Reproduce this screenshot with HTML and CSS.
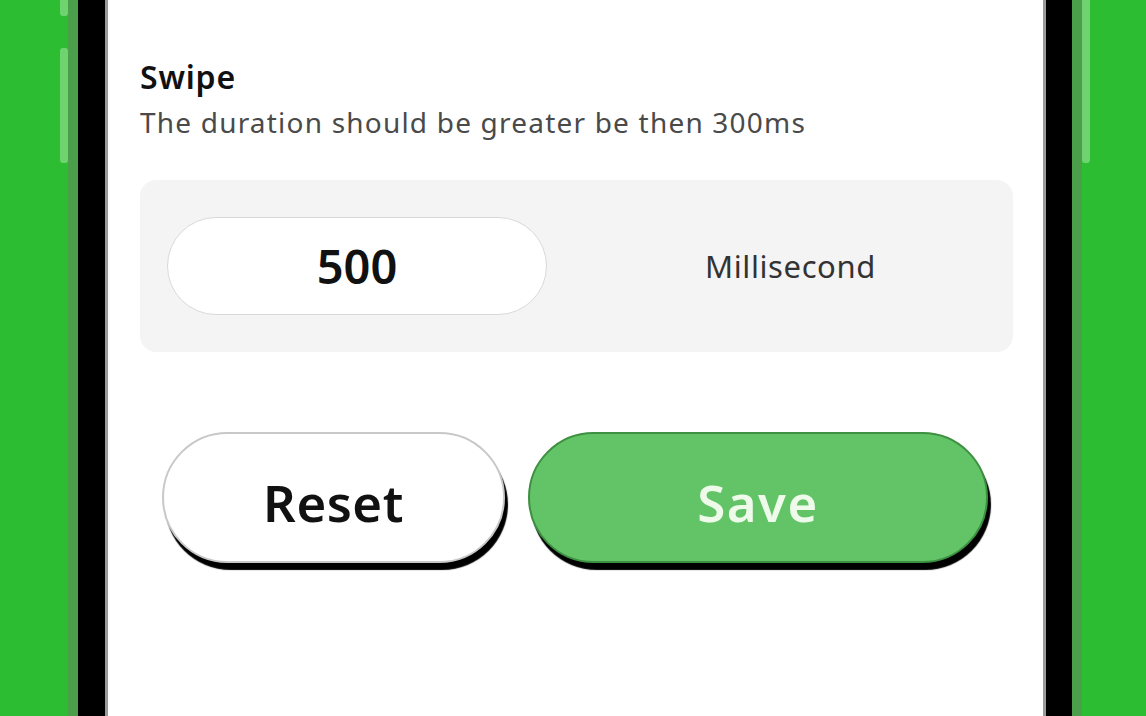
FILE: index.html
```html
<!DOCTYPE html>
<html>
<head>
<meta charset="utf-8">
<link rel="stylesheet" href="styles.css">
</head>
<body>
<div class="device">
  <div class="side side-left">
    <span class="key key-a"></span>
    <span class="key key-b"></span>
  </div>
  <div class="frame">
    <div class="bezel">
      <div class="screen">
        <div class="section">
          <h2 class="title">Swipe</h2>
          <p class="subtitle">The duration should be greater be then 300ms</p>
        </div>
        <div class="panel">
          <div class="input-pill">500</div>
          <div class="unit">Millisecond</div>
        </div>
        <div class="actions">
          <button class="btn btn-reset">Reset</button>
          <button class="btn btn-save">Save</button>
        </div>
      </div>
    </div>
  </div>
  <div class="side side-right">
    <span class="key key-c"></span>
  </div>
</div>
</body>
</html>
```
FILE: styles.css
```css
* { box-sizing: border-box; }
html, body {
  margin: 0;
  height: 716px;
  overflow: hidden;
}
body {
  background: #2dbd33;
  font-family: "Noto Sans", "Liberation Sans", sans-serif;
}
.device {
  display: flex;
  height: 716px;
  margin-left: 60px;
}
.side {
  width: 8px;
  display: flex;
  flex-direction: column;
}
.key {
  display: block;
  width: 8px;
  background: #6fd46f;
  border-radius: 0 0 3px 3px;
}
.key-a { height: 16px; }
.key-b { height: 115px; margin-top: 32px; border-radius: 3px; }
.key-c { height: 163px; }
.frame {
  background: #4b9f4b;
  padding: 0 10px;
  height: 716px;
}
.bezel {
  background: #000;
  padding: 0 26px 0 27px;
  height: 716px;
}
.screen {
  width: 941px;
  height: 716px;
  background: #fff;
  border-left: 3px solid #9a9a9a;
  border-right: 3px solid #9a9a9a;
  padding: 56px 30px 0 32px;
}
.title {
  margin: 0;
  font-size: 32px;
  font-weight: 600;
  letter-spacing: 0.8px;
  color: #111;
  line-height: 42px;
}
.subtitle {
  margin: 6px 0 0;
  font-size: 28px;
  letter-spacing: 1.2px;
  color: #4a4a4a;
  line-height: 36px;
}
.panel {
  margin-top: 40px;
  height: 172px;
  background: #f4f4f4;
  border-radius: 16px;
  display: flex;
  align-items: center;
  padding-left: 27px;
}
.input-pill {
  width: 380px;
  height: 98px;
  background: #fff;
  border: 1px solid #d9d9d9;
  border-radius: 49px;
  display: flex;
  align-items: center;
  justify-content: center;
  font-size: 47px;
  font-weight: 600;
  color: #111;
}
.unit {
  margin-left: 158px;
  font-size: 31px;
  letter-spacing: 0.6px;
  color: #333;
}
.actions {
  margin-top: 80px;
  margin-left: 22px;
  display: flex;
  gap: 23px;
}
.btn {
  height: 131px;
  border-radius: 66px;
  font-family: inherit;
  font-size: 51px;
  font-weight: 600;
  letter-spacing: 0.5px;
  padding-top: 10px;
  box-shadow: 3px 7px 1px #000;
  cursor: pointer;
}
.btn-reset {
  width: 343px;
  background: #fff;
  border: 2px solid #c8c8c8;
  color: #111;
}
.btn-save {
  width: 460px;
  background: #62c466;
  border: 2px solid #3d8f41;
  color: #eefbea;
  letter-spacing: 1.5px;
}
```
